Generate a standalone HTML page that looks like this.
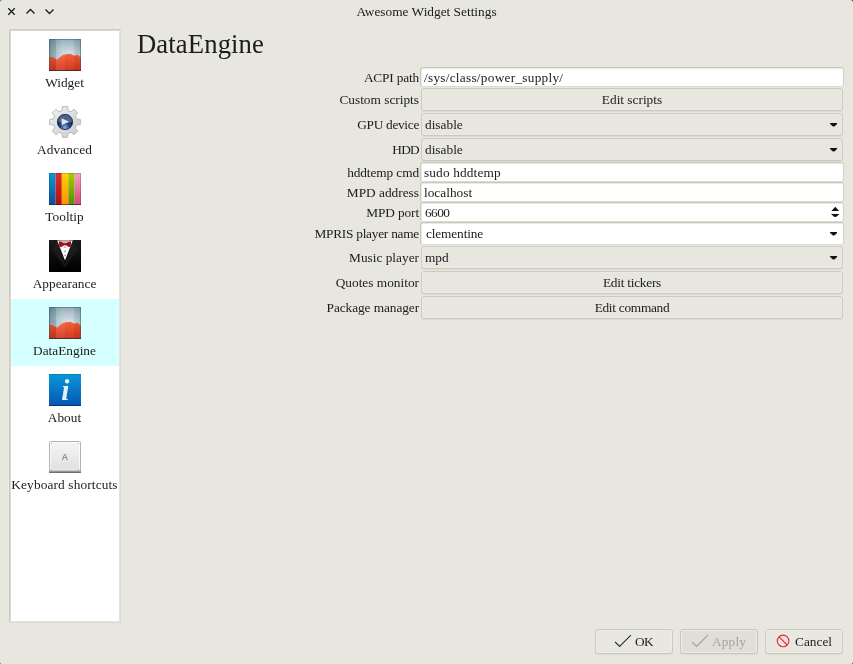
<!DOCTYPE html>
<html><head><meta charset="utf-8"><title>Awesome Widget Settings</title>
<style>
*{box-sizing:border-box;margin:0;padding:0}
html,body{width:853px;height:664px;overflow:hidden}
body{background:#e7e6df;font-family:"Liberation Serif",serif;font-size:13.33px;color:#1c1c1c;position:relative}
#root{position:absolute;left:0;top:0;width:853px;height:664px;will-change:transform}
.abs{position:absolute}
.t{position:absolute;white-space:nowrap;line-height:16px;height:16px}
#title{left:0;width:853px;top:4px;text-align:center}
#list{left:9px;top:29px;width:112px;height:594px;background:#fff;border:1px solid #dadad2;border-top-color:#c8c8bb;border-left-color:#c8c8bb;border-radius:2px;box-shadow:inset 1px 1px 0 #dddcd3,inset -1px -1px 0 #e4e4dd,-1px -1px 0 rgba(240,239,234,0.5)}
.item{position:absolute;left:11px;width:108px;height:67px}
.item .ic{position:absolute;left:38px;top:8px;width:32px;height:32px}
.item .lb{position:absolute;left:-11px;right:-10px;top:44px;text-align:center;line-height:16px;white-space:nowrap}
.sel{background:#d6ffff}
h1{position:absolute;left:137px;top:28px;letter-spacing:0.12px;font-size:26.67px;font-weight:normal;line-height:32px;white-space:nowrap}
.lab{position:absolute;right:434px;text-align:right;white-space:nowrap;line-height:16px}
.inp{position:absolute;left:420px;width:424px;height:20px;background:#fff;border:1px solid #c9c8b9;border-right-color:#d3d2c6;border-bottom-color:#dddcd3;border-radius:3px;box-shadow:inset 1px 1px 0 rgba(205,204,190,0.4)}
.inp span,.cmb span{position:absolute;left:3px;top:2px;line-height:16px;white-space:nowrap}
.btn{position:absolute;left:421px;width:422px;height:23px;border:1px solid #cbcabc;border-radius:3px;background:#e7e6df;text-align:center;line-height:21px;box-shadow:0 1px 0 #dcdbd5,inset 0 0 0 1px #eae9e3}
.cmb{position:absolute;left:421px;width:422px;height:23px;border:1px solid #cbcabc;border-radius:3px;background:#e7e6df;box-shadow:0 1px 0 #dcdbd5,inset 0 0 0 1px #eae9e3}
.cmb span{left:3px;top:3px}
.arr{position:absolute;right:4.6px;top:9px;width:7.6px;height:3.6px;background:#111;clip-path:polygon(0 0,100% 0,100% 22%,59% 100%,41% 100%,0 22%)}
.bb{position:absolute;top:629px;width:78px;height:25px;border:1px solid #cbcabc;border-radius:3px;background:#e8e7e0;box-shadow:0 1px 0 #dcdbd5,inset 0 0 0 1px #ecebe5}
</style></head><body><div id="root">
<div id="title" class="t">Awesome Widget Settings</div>
<svg class="abs" style="left:0;top:0" width="60" height="24" viewBox="0 0 60 24" fill="none" stroke="#1a1a1a" stroke-width="1.3"><path d="M8.25 8.3l6.5 6.5M14.75 8.3l-6.5 6.5"/><path d="M26.5 13.5l4-4 4 4"/><path d="M45.5 9.5l4 4 4-4"/></svg>
<svg class="abs" style="left:0;top:0" width="3" height="3" viewBox="0 0 3 3"><path transform="rotate(0 1.5 1.5)" d="M0 0H2.6A2.6 2.6 0 0 0 0 2.6Z" fill="#0fa097"/></svg><svg class="abs" style="right:0;top:0" width="3" height="3" viewBox="0 0 3 3"><path transform="rotate(90 1.5 1.5)" d="M0 0H2.6A2.6 2.6 0 0 0 0 2.6Z" fill="#b02000"/></svg><svg class="abs" style="right:0;bottom:0" width="3" height="3" viewBox="0 0 3 3"><path transform="rotate(180 1.5 1.5)" d="M0 0H2.6A2.6 2.6 0 0 0 0 2.6Z" fill="#5a3a78"/></svg><svg class="abs" style="left:0;bottom:0" width="3" height="3" viewBox="0 0 3 3"><path transform="rotate(270 1.5 1.5)" d="M0 0H2.6A2.6 2.6 0 0 0 0 2.6Z" fill="#d05a08"/></svg>
<div id="list" class="abs"></div>
<div class="item" style="top:31px"><svg class="ic" viewBox="0 0 32 32"><defs>
<radialGradient id="wg" cx="0.62" cy="0.55" r="0.75"><stop offset="0" stop-color="#e0e9ec"/><stop offset="0.45" stop-color="#b2c5cd"/><stop offset="1" stop-color="#6f8fa0"/></radialGradient>
<linearGradient id="wr" x1="0" y1="0" x2="0" y2="1"><stop offset="0" stop-color="#f65a30"/><stop offset="1" stop-color="#cf3019"/></linearGradient></defs>
<rect width="32" height="32" fill="url(#wg)"/>
<path d="M0 18L3 18.1L7 20L8.3 20.7L11 18L14 15.9L17 15.2L21 14.7L23 15.4L25.5 16.8L28 15.8L30 17L32 18.6V32H0Z" fill="url(#wr)"/>
<rect x="0" y="0" width="7" height="32" fill="#20485c" opacity="0.10"/><rect x="7" y="0" width="9" height="32" fill="#fff" opacity="0.10"/><rect x="16" y="0" width="9" height="32" fill="#fff" opacity="0.04"/><rect x="25" y="0" width="7" height="32" fill="#20485c" opacity="0.07"/>
<rect x="0" y="31.2" width="32" height="0.8" fill="#4a100c"/><rect x="0.5" y="0.5" width="31" height="31" fill="none" stroke="#2f4a5a" stroke-opacity="0.4"/>
</svg><div class="lb">Widget</div></div>
<div class="item" style="top:98px"><svg class="ic" viewBox="0 0 32 32"><defs>
<linearGradient id="gg" x1="0" y1="0" x2="1" y2="1"><stop offset="0" stop-color="#f2f2f2"/><stop offset="1" stop-color="#c9c9c9"/></linearGradient>
<radialGradient id="gb" cx="0.5" cy="0.85" r="0.6"><stop offset="0" stop-color="#86b0e8"/><stop offset="0.5" stop-color="#21427c"/><stop offset="1" stop-color="#112754"/></radialGradient></defs>
<path d="M13.06 4.47 L13.44 0.61 L18.56 0.61 L18.94 4.47 L22.07 5.77 L25.07 3.31 L28.69 6.93 L26.23 9.93 L27.53 13.06 L31.39 13.44 L31.39 18.56 L27.53 18.94 L26.23 22.07 L28.69 25.07 L25.07 28.69 L22.07 26.23 L18.94 27.53 L18.56 31.39 L13.44 31.39 L13.06 27.53 L9.93 26.23 L6.93 28.69 L3.31 25.07 L5.77 22.07 L4.47 18.94 L0.61 18.56 L0.61 13.44 L4.47 13.06 L5.77 9.93 L3.31 6.93 L6.93 3.31 L9.93 5.77Z" fill="url(#gg)" stroke="#b4b4b4" stroke-width="0.9" stroke-linejoin="round"/>
<circle cx="16" cy="16" r="7.9" fill="url(#gb)"/>
<path d="M8.3 15.5A7.7 7.7 0 0 1 23.7 15.5Q16 18.5 8.3 15.5Z" fill="#9fb6d6" opacity="0.42"/>
<circle cx="16" cy="16" r="7.6" fill="none" stroke="#17305e" stroke-width="0.8"/>
<path d="M12.6 12.2V19.2L20 15.7Z" fill="#e6e6e6"/>
</svg><div class="lb" style="letter-spacing:0.1px">Advanced</div></div>
<div class="item" style="top:165px"><svg class="ic" viewBox="0 0 32 32"><defs>
<linearGradient id="t1" x1="0" y1="0" x2="0" y2="1"><stop offset="0" stop-color="#0a9bd8"/><stop offset="1" stop-color="#0a4d9a"/></linearGradient>
<linearGradient id="t2" x1="0" y1="0" x2="0" y2="1"><stop offset="0" stop-color="#e82a2a"/><stop offset="1" stop-color="#a61313"/></linearGradient>
<linearGradient id="t3" x1="0" y1="0" x2="0" y2="1"><stop offset="0" stop-color="#ffd200"/><stop offset="1" stop-color="#ff8e00"/></linearGradient>
<linearGradient id="t4" x1="0" y1="0" x2="0" y2="1"><stop offset="0" stop-color="#aacd00"/><stop offset="1" stop-color="#588a0a"/></linearGradient>
<linearGradient id="t5" x1="0" y1="0" x2="0" y2="1"><stop offset="0" stop-color="#f5a2c2"/><stop offset="1" stop-color="#d84676"/></linearGradient></defs>
<rect x="0" y="0" width="6.6" height="32" fill="url(#t1)"/><rect x="6.6" y="0" width="6.2" height="32" fill="url(#t2)"/><rect x="12.8" y="0" width="6.5" height="32" fill="url(#t3)"/><rect x="19.3" y="0" width="6.4" height="32" fill="url(#t4)"/><rect x="25.7" y="0" width="6.3" height="32" fill="url(#t5)"/>
<rect x="0.5" y="0.5" width="31" height="31" fill="none" stroke="#102040" stroke-opacity="0.2"/><rect x="0" y="31" width="32" height="1" fill="#201020" opacity="0.45"/>
</svg><div class="lb">Tooltip</div></div>
<div class="item" style="top:232px"><svg class="ic" viewBox="0 0 32 32"><defs>
<linearGradient id="x1" x1="0" y1="0" x2="0" y2="1"><stop offset="0" stop-color="#1c1c1c"/><stop offset="0.6" stop-color="#0a0a0a"/><stop offset="1" stop-color="#000"/></linearGradient></defs>
<rect width="32" height="32" fill="url(#x1)"/>
<path d="M3 9.5L8 1L16 24L24 1L29 9.5L16.5 27H15.5Z" fill="#262626" opacity="0.5"/>
<path d="M8.2 0.6H23.8L16 20.4Z" fill="#fafafa"/>
<path d="M11.5 0.6H20.5L16 3.4Z" fill="#b8b8b8"/>
<path d="M10 1.4Q12 0.8 14.6 3L16 3.2L17.4 3Q20 0.8 22 1.4Q22.4 4 21.6 6.8Q19.6 7.4 17.4 5.4L16 5.2L14.6 5.4Q12.4 7.4 10.4 6.8Q9.6 4 10 1.4Z" fill="#a31212"/>
<circle cx="16" cy="7.3" r="0.8" fill="#9a9a9a"/><circle cx="16" cy="11.4" r="0.8" fill="#9a9a9a"/><circle cx="16" cy="15.4" r="0.8" fill="#9a9a9a"/>
</svg><div class="lb">Appearance</div></div>
<div class="item sel" style="top:299px"><svg class="ic" viewBox="0 0 32 32"><defs>
<radialGradient id="wg2" cx="0.62" cy="0.55" r="0.75"><stop offset="0" stop-color="#e0e9ec"/><stop offset="0.45" stop-color="#b2c5cd"/><stop offset="1" stop-color="#6f8fa0"/></radialGradient>
<linearGradient id="wr2" x1="0" y1="0" x2="0" y2="1"><stop offset="0" stop-color="#f65a30"/><stop offset="1" stop-color="#cf3019"/></linearGradient></defs>
<rect width="32" height="32" fill="url(#wg2)"/>
<path d="M0 18L3 18.1L7 20L8.3 20.7L11 18L14 15.9L17 15.2L21 14.7L23 15.4L25.5 16.8L28 15.8L30 17L32 18.6V32H0Z" fill="url(#wr2)"/>
<rect x="0" y="0" width="7" height="32" fill="#20485c" opacity="0.10"/><rect x="7" y="0" width="9" height="32" fill="#fff" opacity="0.10"/><rect x="16" y="0" width="9" height="32" fill="#fff" opacity="0.04"/><rect x="25" y="0" width="7" height="32" fill="#20485c" opacity="0.07"/>
<rect x="0" y="31.2" width="32" height="0.8" fill="#4a100c"/><rect x="0.5" y="0.5" width="31" height="31" fill="none" stroke="#2f4a5a" stroke-opacity="0.4"/>
</svg><div class="lb">DataEngine</div></div>
<div class="item" style="top:366px"><svg class="ic" viewBox="0 0 32 32"><defs>
<linearGradient id="a1" x1="0" y1="0" x2="0" y2="1"><stop offset="0" stop-color="#0a98d8"/><stop offset="1" stop-color="#0656b2"/></linearGradient></defs>
<rect width="32" height="32" fill="url(#a1)"/><rect x="0" y="31" width="32" height="1" fill="#0a3670"/><rect x="0" y="0" width="32" height="1" fill="#0a6aa8" opacity="0.6"/>
<text x="16.4" y="25.7" font-family="Liberation Serif,serif" font-style="italic" font-weight="bold" font-size="29.5" text-anchor="middle" fill="#e4f0fc">i</text>
</svg><div class="lb">About</div></div>
<div class="item" style="top:433px"><svg class="ic" viewBox="0 0 32 32"><defs>
<linearGradient id="k1" x1="0" y1="0" x2="0" y2="1"><stop offset="0" stop-color="#f6f6f6"/><stop offset="1" stop-color="#dedede"/></linearGradient></defs>
<rect x="0.5" y="0.5" width="31" height="31" rx="1" fill="url(#k1)" stroke="#b2b2b2"/>
<rect x="1.5" y="1.5" width="29" height="27.5" fill="none" stroke="#fff" stroke-opacity="0.7"/>
<rect x="1" y="29" width="30" height="1.4" fill="#c4c4c4"/><rect x="0" y="30.4" width="32" height="1.6" fill="#707070"/>
<circle cx="2.4" cy="2.4" r="0.5" fill="#999"/><circle cx="29.6" cy="2.4" r="0.5" fill="#999"/><circle cx="2.4" cy="28.8" r="0.5" fill="#999"/><circle cx="29.6" cy="28.8" r="0.5" fill="#999"/>
<text x="15.9" y="19" font-family="Liberation Sans,sans-serif" font-size="8.5" text-anchor="middle" fill="#555">A</text>
</svg><div class="lb" style="letter-spacing:0.13px">Keyboard shortcuts</div></div>
<h1>DataEngine</h1>

<div class="lab" style="top:70px;letter-spacing:-0.17px">ACPI path</div>
<div class="inp" style="top:67px"><span style="top:2px;letter-spacing:0.25px">/sys/class/power_supply/</span></div>
<div class="lab" style="top:92px;letter-spacing:0px">Custom scripts</div>
<div class="btn" style="top:88px">Edit scripts</div>
<div class="lab" style="top:117px;letter-spacing:-0.3px">GPU device</div>
<div class="cmb" style="top:113px"><span>disable</span><i class="arr"></i></div>
<div class="lab" style="top:142px;letter-spacing:-0.7px">HDD</div>
<div class="cmb" style="top:138px"><span>disable</span><i class="arr"></i></div>
<div class="lab" style="top:165px;letter-spacing:-0.1px">hddtemp cmd</div>
<div class="inp" style="top:162px"><span style="letter-spacing:0.13px">sudo hddtemp</span></div>
<div class="lab" style="top:185px;letter-spacing:0px">MPD address</div>
<div class="inp" style="top:182px"><span>localhost</span></div>
<div class="lab" style="top:205px;letter-spacing:-0.12px">MPD port</div>
<div class="inp" style="top:202px"><span style="left:4px;letter-spacing:-0.6px">6600</span><svg class="abs" style="right:3px;top:3px" width="9" height="13" viewBox="0 0 9 13" fill="#111"><path d="M4.25 0.8L8.1 5H0.4Z"/><path d="M0.4 8H8.1V8.5L4.9 11.1H3.6L0.4 8.5Z"/></svg></div>
<div class="lab" style="top:226px;letter-spacing:-0.25px">MPRIS player name</div>
<div class="inp" style="top:222px;height:23px"><span style="left:5px;top:3px;letter-spacing:-0.14px">clementine</span><i class="arr" style="right:5.6px"></i></div>
<div class="lab" style="top:250px;letter-spacing:0px">Music player</div>
<div class="cmb" style="top:246px"><span>mpd</span><i class="arr"></i></div>
<div class="lab" style="top:275px;letter-spacing:0px">Quotes monitor</div>
<div class="btn" style="top:271px;letter-spacing:-0.25px">Edit tickers</div>
<div class="lab" style="top:300px;letter-spacing:-0.08px">Package manager</div>
<div class="btn" style="top:296px;letter-spacing:-0.28px">Edit command</div>

<div class="bb" style="left:595px"><svg class="abs" style="left:17px;top:3px" width="20" height="18" viewBox="0 0 20 18" fill="none" stroke="#2a3444" stroke-width="1.15"><path d="M2.1 9l4.5 4.5L17.9 2.2"/></svg><span class="t" style="left:39px;top:4px;letter-spacing:-0.6px">OK</span></div>
<div class="bb" style="left:680px;background:#dfded7;border-color:#c6c5b7"><svg class="abs" style="left:9px;top:3px" width="20" height="18" viewBox="0 0 20 18" fill="none" stroke="#a3a39c" stroke-width="1.15"><path d="M2.1 9l4.5 4.5L17.9 2.2"/></svg><span class="t" style="left:31px;top:4px;color:#a6a69f;letter-spacing:0.15px">Apply</span></div>
<div class="bb" style="left:765px"><svg class="abs" style="left:9px;top:3px" width="18" height="18" viewBox="0 0 18 18" fill="none" stroke="#ee2840" stroke-width="1.15"><circle cx="8.1" cy="7.9" r="5.8"/><path d="M4 3.8l8.2 8.2"/></svg><span class="t" style="left:29px;top:4px">Cancel</span></div>
</div></body></html>
